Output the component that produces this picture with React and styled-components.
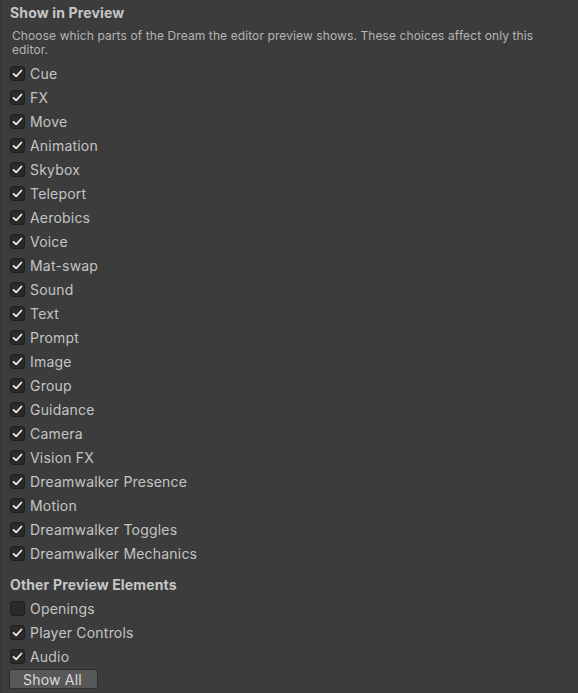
import React from "react";
import styled, { createGlobalStyle } from "styled-components";

const Global = createGlobalStyle`
  html, body { margin: 0; padding: 0; background: #3c3c3c; }
  body { font-family: Inter, "Noto Sans", sans-serif; }
`;

const Panel = styled.div`
  width: 578px;
  height: 693px;
  box-sizing: border-box;
  background: #3c3c3c;
  border-left: 1px solid #353535;
  padding: 3px 0 0 9px;
  color: #c4c4c4;
  overflow: hidden;
`;

const Heading = styled.div`
  font-weight: 700;
  font-size: 14px;
  line-height: 20px;
  letter-spacing: 0.15px;
  color: #c6c6c6;
  margin-top: ${(p) => p.$top || 0}px;
  margin-bottom: ${(p) => p.$bottom || 0}px;
`;

const Description = styled.div`
  font-size: 12px;
  line-height: 14px;
  letter-spacing: 0.1px;
  color: #b4b4b4;
  padding: 6px 30px 0 2px;
  margin-bottom: 4px;
`;

const List = styled.div`
  display: flex;
  flex-direction: column;
`;

const Row = styled.label`
  display: flex;
  align-items: center;
  height: 24px;
  gap: 6px;
  font-size: 14px;
  letter-spacing: 0.2px;
  color: #c4c4c4;
`;

const Box = styled.span`
  width: 15px;
  height: 15px;
  box-sizing: border-box;
  border: 1px solid #1e1e1e;
  border-radius: 3px;
  background: #2a2a2a;
  display: flex;
  align-items: center;
  justify-content: center;
  flex: none;
  margin-right: -1px;
`;

const Button = styled.div`
  width: 89px;
  height: 20px;
  box-sizing: border-box;
  margin-top: 1px;
  margin-left: -1px;
  background: #585858;
  border: 1px solid #2f2f2f;
  border-radius: 3px;
  display: flex;
  align-items: center;
  justify-content: center;
  padding-right: 2px;
  font-size: 14px;
  letter-spacing: 0.2px;
  color: #dadada;
`;

const Check = () => (
  <svg width="11" height="11" viewBox="0 0 10 10">
    <path d="M1.4 5.3 L3.8 7.6 L8.6 2.3" fill="none" stroke="#f0f0f0" strokeWidth="1.6" strokeLinecap="round" strokeLinejoin="round" />
  </svg>
);

const Item = ({ label, checked = true }) => (
  <Row>
    <Box>{checked && <Check />}</Box>
    {label}
  </Row>
);

const main = [
  "Cue", "FX", "Move", "Animation", "Skybox", "Teleport", "Aerobics", "Voice",
  "Mat-swap", "Sound", "Text", "Prompt", "Image", "Group", "Guidance", "Camera",
  "Vision FX", "Dreamwalker Presence", "Motion", "Dreamwalker Toggles", "Dreamwalker Mechanics",
];

export default function App() {
  return (
    <>
      <Global />
      <Panel>
        <Heading>Show in Preview</Heading>
        <Description>
          Choose which parts of the Dream the editor preview shows. These choices affect only this editor.
        </Description>
        <List>
          {main.map((m) => <Item key={m} label={m} />)}
        </List>
        <Heading $top={10} $bottom={1}>Other Preview Elements</Heading>
        <List>
          <Item label="Openings" checked={false} />
          <Item label="Player Controls" />
          <Item label="Audio" />
        </List>
        <Button>Show All</Button>
      </Panel>
    </>
  );
}
